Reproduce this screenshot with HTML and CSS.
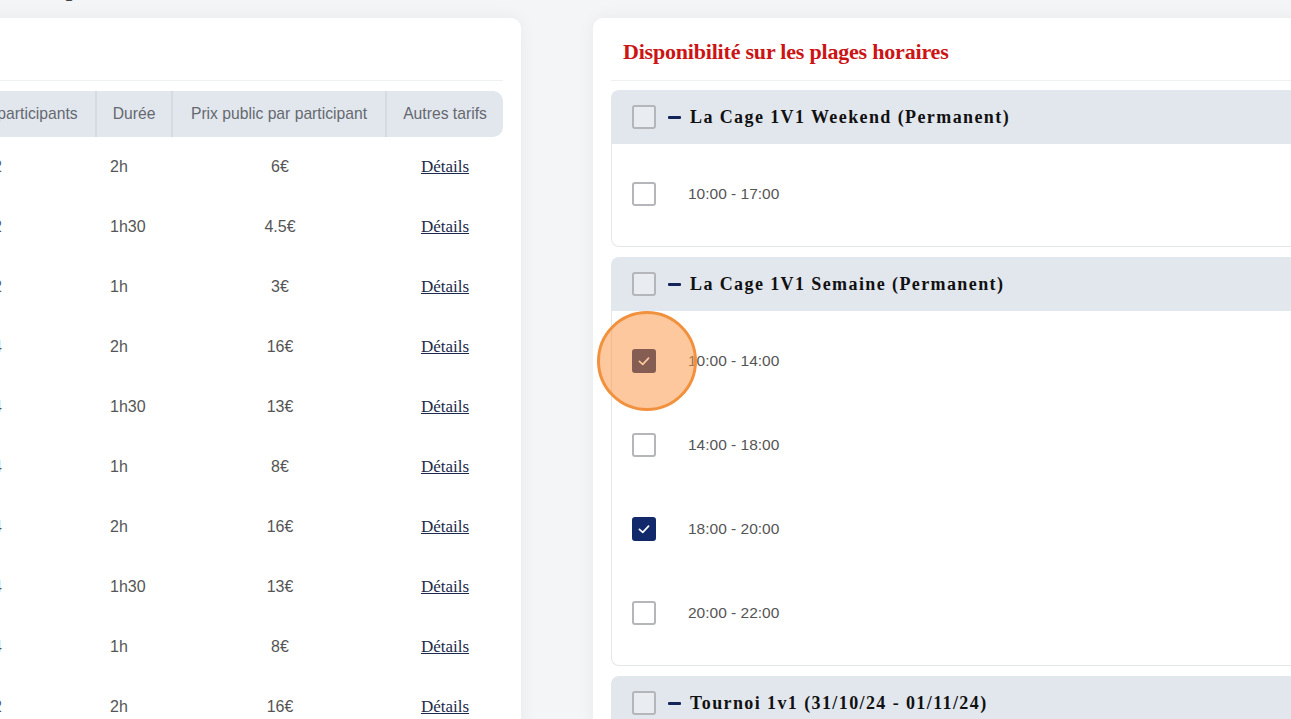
FILE: index.html
```html
<!DOCTYPE html>
<html lang="fr">
<head>
    <meta charset="UTF-8">
    <meta name="viewport" content="width=device-width, initial-scale=1.0">
    <title>Tarifs et plages horaires</title>
    <link rel="stylesheet" href="styles.css">
</head>
<body>
    <div class="page">
        <h1 class="page-title">Tarifs et horaires du complexe</h1>

        <div class="columns">
            <!-- Price grid -->
            <section class="card prices">
                <div class="card-head">
                    <h2 class="card-title">Grille tarifaire</h2>
                </div>

                <table class="price-table">
                    <colgroup>
                        <col style="width: 180px">
                        <col style="width: 199px">
                        <col style="width: 76px">
                        <col style="width: 214px">
                        <col style="width: 116px">
                    </colgroup>
                    <thead>
                        <tr>
                            <th>Activité</th>
                            <th>Nombre de participants</th>
                            <th>Durée</th>
                            <th>Prix public par participant</th>
                            <th>Autres tarifs</th>
                        </tr>
                    </thead>
                    <tbody>
                        <tr><td>La Cage 1V1</td><td>2</td><td class="duration">2h</td><td>6€</td><td><a href="#" class="details">Détails</a></td></tr>
                        <tr><td>La Cage 1V1</td><td>2</td><td class="duration">1h30</td><td>4.5€</td><td><a href="#" class="details">Détails</a></td></tr>
                        <tr><td>La Cage 1V1</td><td>2</td><td class="duration">1h</td><td>3€</td><td><a href="#" class="details">Détails</a></td></tr>
                        <tr><td>Foot 5</td><td>4</td><td class="duration">2h</td><td>16€</td><td><a href="#" class="details">Détails</a></td></tr>
                        <tr><td>Foot 5</td><td>4</td><td class="duration">1h30</td><td>13€</td><td><a href="#" class="details">Détails</a></td></tr>
                        <tr><td>Foot 5</td><td>4</td><td class="duration">1h</td><td>8€</td><td><a href="#" class="details">Détails</a></td></tr>
                        <tr><td>Padel</td><td>4</td><td class="duration">2h</td><td>16€</td><td><a href="#" class="details">Détails</a></td></tr>
                        <tr><td>Padel</td><td>4</td><td class="duration">1h30</td><td>13€</td><td><a href="#" class="details">Détails</a></td></tr>
                        <tr><td>Padel</td><td>4</td><td class="duration">1h</td><td>8€</td><td><a href="#" class="details">Détails</a></td></tr>
                        <tr><td>Tournoi</td><td>2</td><td class="duration">2h</td><td>16€</td><td><a href="#" class="details">Détails</a></td></tr>
                    </tbody>
                </table>
            </section>

            <!-- Time slots -->
            <section class="card slots">
                <div class="card-head">
                    <h2 class="card-title">Disponibilité sur les plages horaires</h2>
                </div>

                <div class="group">
                    <div class="group-head">
                        <span class="box"></span>
                        <span class="dash"></span>
                        <span class="group-name">La Cage 1V1 Weekend (Permanent)</span>
                    </div>
                    <div class="group-body">
                        <div class="slot"><span class="box"></span><span class="slot-time">10:00 - 17:00</span></div>
                    </div>
                </div>

                <div class="group">
                    <div class="group-head">
                        <span class="box"></span>
                        <span class="dash"></span>
                        <span class="group-name">La Cage 1V1 Semaine (Permanent)</span>
                    </div>
                    <div class="group-body">
                        <div class="slot">
                            <span class="box checked">
                                <svg viewBox="0 0 24 24"><polyline points="6.5,12.5 10.5,16 17.5,8.5"/></svg>
                                <span class="click-ring"></span>
                            </span>
                            <span class="slot-time">10:00 - 14:00</span>
                        </div>
                        <div class="slot"><span class="box"></span><span class="slot-time">14:00 - 18:00</span></div>
                        <div class="slot">
                            <span class="box checked">
                                <svg viewBox="0 0 24 24"><polyline points="6.5,12.5 10.5,16 17.5,8.5"/></svg>
                            </span>
                            <span class="slot-time">18:00 - 20:00</span>
                        </div>
                        <div class="slot"><span class="box"></span><span class="slot-time">20:00 - 22:00</span></div>
                    </div>
                </div>

                <div class="group">
                    <div class="group-head">
                        <span class="box"></span>
                        <span class="dash"></span>
                        <span class="group-name">Tournoi 1v1 (31/10/24 - 01/11/24)</span>
                    </div>
                    <div class="group-body">
                        <div class="slot"><span class="box"></span><span class="slot-time">14:00 - 18:00</span></div>
                    </div>
                </div>
            </section>
        </div>
    </div>
</body>
</html>
```

FILE: styles.css
```css
/* Page base */
body {
    margin: 0;
    overflow: hidden;
    background-color: #f4f5f6;
    font-family: "Liberation Sans", Arial, sans-serif;
}

.page {
    margin-left: -300px;
}

.page-title {
    margin: -28px 0 0 86px;
    height: 28px;
    font-family: "Liberation Serif", serif;
    font-size: 28px;
    line-height: 28px;
    font-weight: normal;
    color: #444;
    white-space: nowrap;
}

.columns {
    display: flex;
    align-items: flex-start;
    gap: 72px;
    margin-top: 18px;
}

/* Cards */
.card {
    flex: none;
    padding: 0 18px 20px;
    background-color: #fff;
    border-radius: 10px;
    box-shadow: 0 0 18px rgba(0, 0, 0, 0.05);
}

.card.prices {
    width: 785px;
}

.card.slots {
    width: 900px;
}

.card-head {
    display: flex;
    align-items: center;
    height: 56px;
    padding: 6px 0 0 12px;
    border-bottom: 1px solid #eef0f2;
}

.card-title {
    margin: 0;
    font-family: "Liberation Serif", serif;
    font-size: 22px;
    font-weight: bold;
    color: #cc1414;
    letter-spacing: -0.2px;
}

/* Price table */
.price-table {
    width: 785px;
    margin-top: 10px;
    table-layout: fixed;
    border-collapse: separate;
    border-spacing: 0;
    font-size: 16px;
}

.price-table th {
    height: 46px;
    padding: 0;
    font-size: 15.7px;
    font-weight: normal;
    color: #65696f;
    background-color: #e2e7ee;
    border-right: 2px solid #d5dbe3;
    white-space: nowrap;
}

.price-table th:first-child {
    border-radius: 10px 0 0 10px;
}

.price-table th:last-child {
    border-right: none;
    border-radius: 0 10px 10px 0;
}

.price-table td {
    height: 60px;
    padding: 0;
    text-align: center;
    color: #555;
}

.price-table td.duration {
    text-align: left;
    padding-left: 13px;
}

.details {
    font-family: "Liberation Serif", serif;
    font-size: 17px;
    color: #1b2a4a;
}

/* Slot groups */
.group {
    margin-top: 9px;
}

.group + .group {
    margin-top: 10px;
}

.group-head {
    display: flex;
    align-items: center;
    height: 54px;
    padding-left: 21px;
    background-color: #e2e7ee;
    border-radius: 8px 0 0 0;
}

.dash {
    width: 13px;
    height: 3px;
    margin: 0 9px 0 12px;
    background-color: #14255a;
    border-radius: 1px;
}

.group-name {
    font-family: "Liberation Serif", serif;
    font-size: 18px;
    font-weight: bold;
    letter-spacing: 1.4px;
    color: #111;
}

.group-body {
    padding: 8px 0 10px;
    border-left: 1px solid #e3e5e8;
    border-bottom: 1px solid #e3e5e8;
    border-radius: 0 0 0 8px;
}

.slot {
    display: flex;
    align-items: center;
    gap: 32px;
    height: 84px;
    padding-left: 20px;
}

.slot-time {
    font-size: 15.5px;
    color: #555;
}

/* Checkboxes */
.box {
    position: relative;
    flex: none;
    width: 20px;
    height: 20px;
    border: 2px solid #b4b6b9;
    border-radius: 3px;
    background-color: #fff;
}

.group-head .box {
    background-color: #e9ecf1;
}

.box.checked {
    border-color: #11296b;
    background-color: #11296b;
}

.box svg {
    display: block;
    width: 20px;
    height: 20px;
    fill: none;
    stroke: #fff;
    stroke-width: 2;
    stroke-linecap: round;
    stroke-linejoin: round;
}

/* Click highlight over the first checked box */
.click-ring {
    position: absolute;
    left: 50%;
    top: 50%;
    z-index: 2;
    width: 94px;
    height: 94px;
    margin: -50px 0 0 -47px;
    border: 3px solid #f2913d;
    border-radius: 50%;
    background-color: rgba(251, 146, 60, 0.5);
}
```
